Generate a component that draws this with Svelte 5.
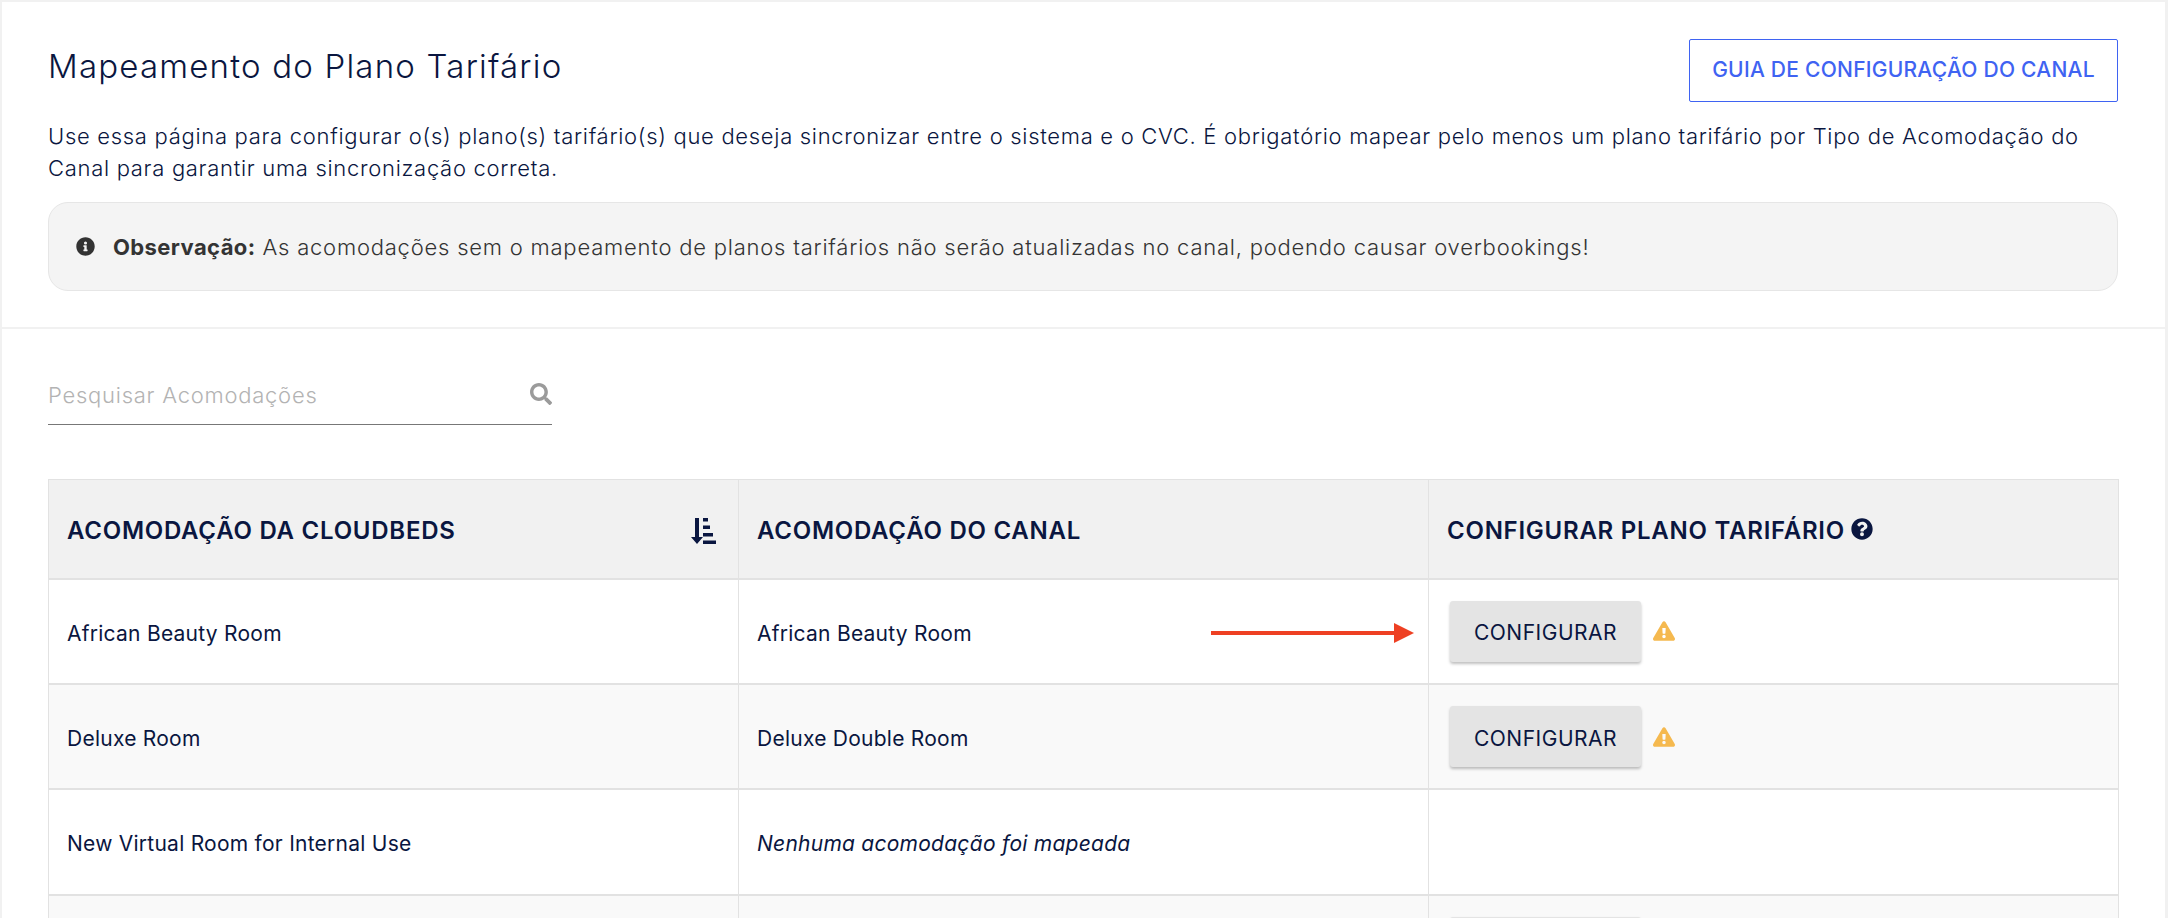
<script>
  const rows = [
    { room: 'African Beauty Room', channel: 'African Beauty Room', action: 'CONFIGURAR' },
    { room: 'Deluxe Room', channel: 'Deluxe Double Room', action: 'CONFIGURAR' },
    { room: 'New Virtual Room for Internal Use', channel: null, action: null },
    // only the top edge of this row's button shows above the fold
    { room: '', channel: '', action: '' }
  ];
</script>

<div class="page">
  <section class="intro">
    <div class="top">
      <h1>Mapeamento do Plano Tarifário</h1>
      <button class="guide">GUIA DE CONFIGURAÇÃO DO CANAL</button>
    </div>
    <p>Use essa página para configurar o(s) plano(s) tarifário(s) que deseja sincronizar entre o sistema e o CVC. É obrigatório mapear pelo menos um plano tarifário por Tipo de Acomodação do Canal para garantir uma sincronização correta.</p>
    <div class="note">
      <svg class="info" viewBox="0 0 512 512" aria-hidden="true"><path d="M256 8C119 8 8 119 8 256s111 248 248 248 248-111 248-248S393 8 256 8zm0 110a42 42 0 1 1 0 84 42 42 0 0 1 0-84zm56 254c0 7-5 12-12 12h-88c-7 0-12-5-12-12v-24c0-7 5-12 12-12h12v-64h-12c-7 0-12-5-12-12v-24c0-7 5-12 12-12h64c7 0 12 5 12 12v100h12c7 0 12 5 12 12v24z"/></svg>
      <span><strong>Observação:</strong> As acomodações sem o mapeamento de planos tarifários não serão atualizadas no canal, podendo causar overbookings!</span>
    </div>
  </section>

  <section class="content">
    <div class="search">
      <span>Pesquisar Acomodações</span>
      <svg viewBox="0 0 512 512" aria-hidden="true"><path d="M505 442.700L405.300 343c-4.500-4.500-10.600-7-17-7H372c27.600-35.300 44-79.700 44-128C416 93.100 322.900 0 208 0S0 93.100 0 208s93.100 208 208 208c48.300 0 92.700-16.400 128-44v16.300c0 6.400 2.500 12.500 7 17l99.700 99.700c9.400 9.400 24.600 9.400 33.900 0l28.300-28.300c9.400-9.400 9.400-24.600.1-34zM208 336c-70.700 0-128-57.200-128-128 0-70.700 57.200-128 128-128 70.700 0 128 57.200 128 128 0 70.700-57.200 128-128 128z"/></svg>
    </div>

    <table>
      <thead>
        <tr>
          <th>
            <div class="th-inner">
              ACOMODAÇÃO DA CLOUDBEDS
              <svg class="sort" viewBox="0 0 26 26" aria-hidden="true">
                <path d="M5 0h4v19h4l-6 7-6-7h4z"/>
                <rect x="13" y="0" width="5" height="3.500"/>
                <rect x="13" y="7.500" width="7" height="3.500"/>
                <rect x="13" y="15" width="10" height="3.500"/>
                <rect x="13" y="22.500" width="13" height="3.500"/>
              </svg>
            </div>
          </th>
          <th>ACOMODAÇÃO DO CANAL</th>
          <th>
            <div class="th-help">
              CONFIGURAR PLANO TARIFÁRIO
              <svg class="help" viewBox="0 0 512 512" aria-hidden="true"><path d="M504 256c0 137-111 248-248 248S8 393 8 256 119 8 256 8s248 111 248 248zM263 90c-54 0-89 23-116 64-4 5-2 12 3 16l35 26c5 4 13 3 17-2 18-23 30-36 57-36 20 0 45 13 45 33 0 15-12 22-32 33-23 13-54 30-54 71v6c0 7 5 12 12 12h56c7 0 12-5 12-12v-2c0-29 84-30 84-107 0-58-60-102-119-102zm-7 244a46 46 0 1 0 0 92 46 46 0 0 0 0-92z"/></svg>
            </div>
          </th>
        </tr>
      </thead>
      <tbody>
        {#each rows as row}
          <tr>
            <td>{row.room}</td>
            <td class:empty={row.channel === null}>{row.channel ?? 'Nenhuma acomodação foi mapeada'}</td>
            <td>
              {#if row.action !== null}
                <div class="action">
                  <button class="configure">{row.action}</button>
                  <svg class="warn" viewBox="0 0 576 512" aria-hidden="true"><path d="M569.500 440C588 472 564.800 512 527.900 512H48.100c-36.900 0-60-40.100-41.600-72L246.400 24c18.500-32 64.700-32 83.200 0l239.900 416zM288 354a46 46 0 1 0 0 92 46 46 0 0 0 0-92zm-44-166 7 128c.3 6 5.300 11 12 11h50c6.700 0 11.700-5 12-11l7-128c.4-7-5-12-12-12h-64c-7 0-12.400 5-12 12z"/></svg>
                </div>
              {/if}
            </td>
          </tr>
        {/each}
      </tbody>
    </table>
  </section>

  <svg class="arrow" viewBox="0 0 203 20" aria-hidden="true">
    <rect x="0" y="8" width="185" height="4" fill="#ee4023"/>
    <path d="M183 0l20 10-20 10z" fill="#ee4023"/>
  </svg>
</div>

<style>
  :global(body) {
    margin: 0;
    background: #fff;
  }
  .page {
    position: relative;
    height: 918px;
    overflow: hidden;
    box-sizing: border-box;
    border-top: 2px solid #f1f1f1;
    border-left: 2px solid #f1f1f1;
    border-right: 3px solid #f1f1f1;
    color: #0a1640;
    font-family: Inter, sans-serif;
  }
  .intro {
    padding: 37px 47px 36px 46px;
    border-bottom: 2px solid #f1f1f1;
  }
  .top {
    display: flex;
    justify-content: space-between;
    align-items: flex-start;
    height: 63px;
  }
  h1 {
    margin: 6px 0 0;
    font-size: 33px;
    line-height: 42px;
    font-weight: 300;
    letter-spacing: 1.2px;
  }
  .guide {
    box-sizing: border-box;
    width: 429px;
    height: 63px;
    padding: 0 0 2px;
    border: 1px solid #3f63f2;
    border-radius: 2px;
    background: #fff;
    color: #3f63f2;
    font-family: inherit;
    font-size: 21px;
    font-weight: 500;
    letter-spacing: 0.25px;
  }
  p {
    margin: 18px 0 18px;
    font-size: 22px;
    line-height: 32px;
    font-weight: 300;
    letter-spacing: 0.7px;
  }
  .note {
    box-sizing: border-box;
    height: 89px;
    display: flex;
    align-items: center;
    gap: 18px;
    padding-left: 27px;
    background: #f4f4f4;
    border: 1px solid #e6e6e6;
    border-radius: 20px;
    color: #333;
    font-size: 22px;
    font-weight: 300;
    letter-spacing: 0.78px;
  }
  .note strong {
    font-weight: 700;
    letter-spacing: 0.4px;
  }
  .info {
    width: 19px;
    height: 19px;
    fill: #333;
    flex: none;
  }
  .content {
    padding: 0 47px 0 46px;
  }
  .search {
    box-sizing: border-box;
    width: 504px;
    height: 96px;
    padding: 47px 0 0;
    display: flex;
    justify-content: space-between;
    color: #b3b3b3;
    font-size: 22px;
    font-weight: 300;
    letter-spacing: 0.75px;
    line-height: 38px;
    border-bottom: 1px solid #777;
  }
  .search svg {
    width: 22px;
    height: 22px;
    margin-top: 7px;
    fill: #9b9b9b;
  }
  table {
    width: 2071px;
    margin-top: 54px;
    border-collapse: collapse;
    table-layout: fixed;
  }
  th, td {
    box-sizing: border-box;
    border: 1px solid #e2e2e2;
    padding: 4px 18px 0;
    text-align: left;
  }
  th {
    height: 99px;
    background: #f1f1f1;
    font-size: 24px;
    font-weight: 600;
    letter-spacing: 0.75px;
    border-bottom-width: 2px;
    white-space: nowrap;
  }
  th:nth-child(1), th:nth-child(2) {
    width: 690px;
  }
  td {
    height: 105.4px;
    font-size: 21px;
    letter-spacing: 0.25px;
    border-bottom-width: 2px;
  }
  tbody tr:nth-child(even) td {
    background: #f9f9f9;
  }
  .empty {
    font-style: italic;
  }
  .th-inner {
    display: flex;
    justify-content: space-between;
    align-items: center;
    padding-right: 4px;
  }
  .sort {
    width: 26px;
    height: 26px;
    fill: #0a1640;
  }
  .th-help {
    display: flex;
    align-items: center;
    gap: 6px;
  }
  .help {
    width: 22px;
    height: 22px;
    margin-top: -3px;
    fill: #0a1640;
  }
  .action {
    display: flex;
    align-items: center;
    gap: 12px;
    margin-top: -4px;
    padding-left: 3px;
  }
  .configure {
    width: 191px;
    height: 61px;
    padding: 3px 0 0;
    border: none;
    border-radius: 3px;
    background: #e4e4e4;
    color: #0a1640;
    font-family: Inter, sans-serif;
    font-size: 21px;
    letter-spacing: 0.5px;
    box-shadow: 0 2px 3px rgba(0, 0, 0, 0.25);
  }
  .warn {
    width: 22px;
    height: 20px;
    fill: #f5b94f;
  }
  .arrow {
    position: absolute;
    left: 1209px;
    top: 621px;
    width: 203px;
    height: 20px;
  }
</style>
